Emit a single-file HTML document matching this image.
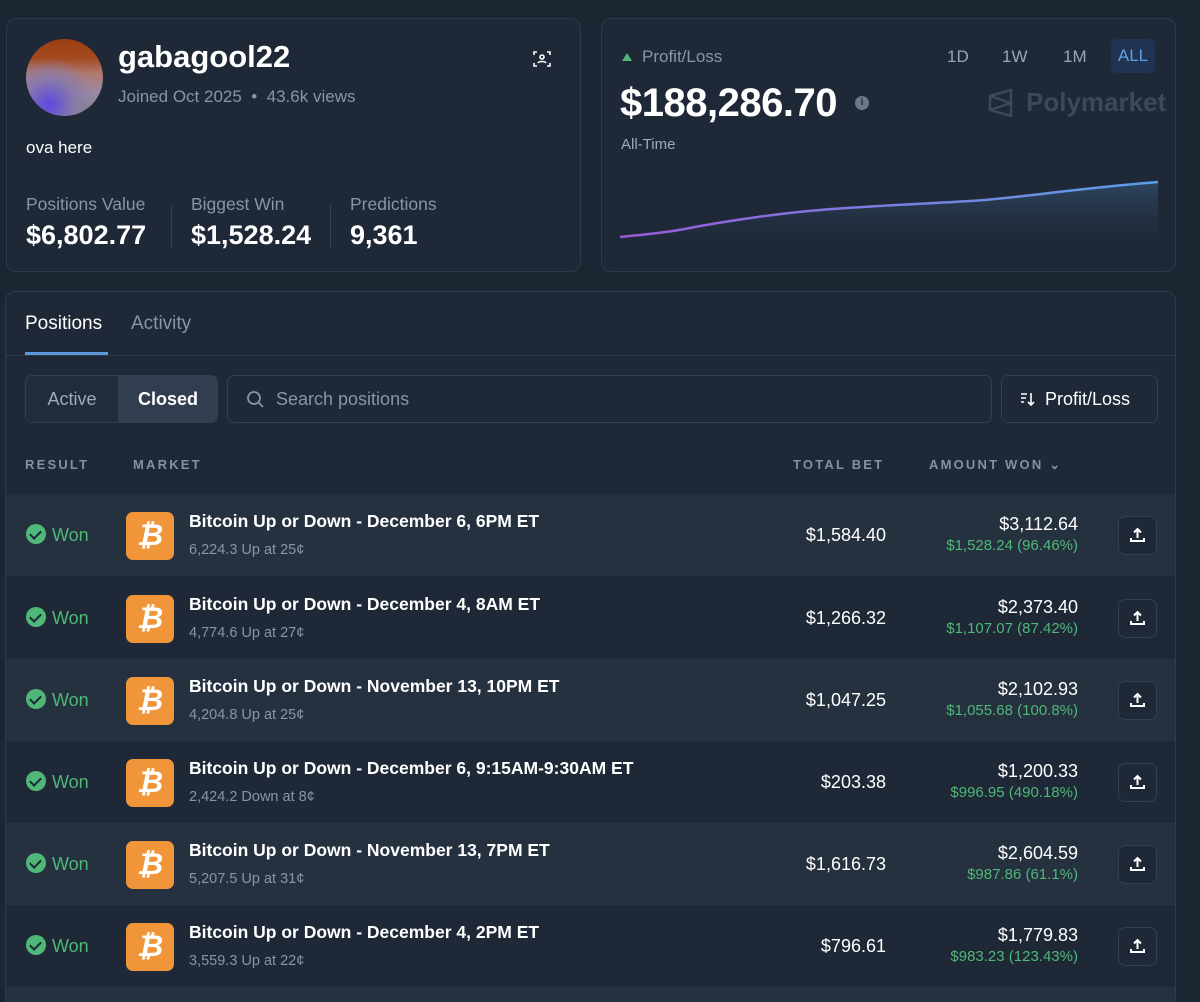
<!DOCTYPE html>
<html><head><meta charset="utf-8"><style>
*{box-sizing:border-box;margin:0;padding:0}
html,body{width:1200px;height:1002px;overflow:hidden}
body{background:#1c2532;font-family:"Liberation Sans",sans-serif;color:#fff;position:relative}
.a{position:absolute}
.card{position:absolute;border:1px solid #2f3a4a;border-radius:10px;background:#1e2836}
.g{color:#8995a5}
.lbl{font-size:13px;letter-spacing:2.2px;font-weight:bold;color:#8591a3}
.row{position:absolute;left:6px;width:1169px;height:82px}
.row.l{background:#263140}
.won{position:absolute;left:20px;top:30px;font-size:18px;color:#4fb878}
.won i{display:inline-block;width:20px;height:20px;border-radius:50%;background:#4fb878;vertical-align:-3px;margin-right:6px;position:relative}
.won i:after{content:"";position:absolute;left:6px;top:4px;width:5px;height:9px;border:solid #1e2836;border-width:0 2.5px 2.5px 0;transform:rotate(45deg)}
.btc{position:absolute;left:120px;top:18px;width:48px;height:48px;border-radius:7px;background:#f0953a;color:#fff;font-size:30px;font-weight:bold;text-align:center;line-height:48px;font-style:italic}
.t{position:absolute;left:183px;top:17px;font-size:17.5px;font-weight:bold}
.s{position:absolute;left:183px;top:48px;font-size:14.5px;color:#8995a5}
.tb{position:absolute;right:289px;top:31px;font-size:18px}
.aw{position:absolute;right:97px;top:19px;font-size:18px;text-align:right;line-height:23px}
.aw span{display:block;font-size:15px;color:#4fb878;line-height:20px}
.sh{position:absolute;left:1112px;top:22px;width:39px;height:39px;border:1px solid #333e4f;border-radius:7px;background:#1e2836}
</style></head><body>
<div class="card" style="left:6px;top:18px;width:575px;height:254px">
 <div class="a" style="left:19px;top:20px;width:77px;height:77px;border-radius:50%;background:radial-gradient(circle at 30% 85%,#5a48e0 0,#8a7aa8 30%,transparent 55%),linear-gradient(180deg,#9a3e12 0,#a34a1e 25%,#b07a70 45%,#9a8aa8 70%,#7a8870 100%)"></div>
 <div class="a" style="left:111px;top:20px;font-size:31px;font-weight:bold">gabagool22</div>
 <div class="a g" style="left:111px;top:68px;font-size:17px">Joined Oct 2025 &nbsp;•&nbsp; 43.6k views</div>
 <svg class="a" style="left:526px;top:31px" width="18" height="18" viewBox="0 0 18 18" fill="none" stroke="#fff" stroke-width="1.6"><path d="M1 5V2h3M14 2h3v3M17 13v3h-3M4 16H1v-3"/><circle cx="9" cy="7" r="2"/><path d="M5 13c1-2 7-2 8 0"/></svg>
 <div class="a" style="left:19px;top:119px;font-size:17px">ova here</div>
 <div class="a g" style="left:19px;top:175px;font-size:17.5px">Positions Value</div>
 <div class="a" style="left:19px;top:201px;font-size:27px;font-weight:bold">$6,802.77</div>
 <div class="a" style="left:164px;top:185px;width:1px;height:44px;background:#333e4f"></div>
 <div class="a g" style="left:184px;top:175px;font-size:17.5px">Biggest Win</div>
 <div class="a" style="left:184px;top:201px;font-size:27px;font-weight:bold">$1,528.24</div>
 <div class="a" style="left:323px;top:185px;width:1px;height:44px;background:#333e4f"></div>
 <div class="a g" style="left:343px;top:175px;font-size:17.5px">Predictions</div>
 <div class="a" style="left:343px;top:201px;font-size:27px;font-weight:bold">9,361</div>
</div>
<div class="card" style="left:601px;top:18px;width:575px;height:254px">
 <div class="a" style="left:20px;top:34px;width:0;height:0;border-left:5px solid transparent;border-right:5px solid transparent;border-bottom:8px solid #4fb878"></div>
 <div class="a g" style="left:40px;top:28px;font-size:17px">Profit/Loss</div>
 <div class="a g" style="left:345px;top:28px;font-size:17px;color:#9aa5b5">1D</div>
 <div class="a g" style="left:400px;top:28px;font-size:17px;color:#9aa5b5">1W</div>
 <div class="a g" style="left:461px;top:28px;font-size:17px;color:#9aa5b5">1M</div>
 <div class="a" style="left:509px;top:20px;width:44px;height:34px;border-radius:6px;background:#223352;color:#5aa0e6;font-size:17px;text-align:center;line-height:34px">ALL</div>
 <div class="a" style="left:18px;top:62px;font-size:40px;font-weight:bold;letter-spacing:-0.5px">$188,286.70</div>
 <div class="a" style="left:253px;top:77px;width:14px;height:14px;border-radius:50%;background:#6c7888;color:#1e2836;font-size:10px;font-weight:bold;text-align:center;line-height:14px">i</div>
 <svg class="a" style="left:386px;top:69px" width="26" height="30" viewBox="0 0 26 30" fill="none" stroke="#3d4858" stroke-width="2.5"><path d="M2 8L23 2v26L2 22zM2 8l21 7M2 22l21-7"/></svg>
 <div class="a" style="left:424px;top:68px;font-size:26px;font-weight:bold;color:#3d4858">Polymarket</div>
 <div class="a g" style="left:19px;top:117px;font-size:15px;color:#a0aab8">All-Time</div>
 <svg class="a" style="left:18px;top:137px" width="538" height="100" viewBox="0 0 538 100"><defs><linearGradient id="f" x1="0" y1="0" x2="0" y2="1"><stop offset="0" stop-color="#3a5a80" stop-opacity=".6"/><stop offset="1" stop-color="#1e2836" stop-opacity="0"/></linearGradient><linearGradient id="s" x1="0" x2="1"><stop offset="0" stop-color="#9a5ad8"/><stop offset="1" stop-color="#5aa0e6"/></linearGradient></defs><path d="M0 81C30 78 50 76 70 72S150 58 200 54S300 48 350 45S450 33 538 26V100H0z" fill="url(#f)"/><path d="M0 81C30 78 50 76 70 72S150 58 200 54S300 48 350 45S450 33 538 26" fill="none" stroke="url(#s)" stroke-width="2.5"/></svg>
</div>
<div class="card" style="left:5px;top:291px;width:1171px;height:740px;background:#1e2836">
 <div class="a" style="left:19px;top:21px;font-size:19px">Positions</div>
 <div class="a g" style="left:125px;top:21px;font-size:19px">Activity</div>
 <div class="a" style="left:19px;top:60px;width:83px;height:3px;background:#5a98d8"></div>
 <div class="a" style="left:0;top:63px;width:1169px;height:1px;background:#2f3a4a"></div>
 <div class="a" style="left:19px;top:83px;width:193px;height:48px;border:1px solid #333e4f;border-radius:7px;overflow:hidden">
  <div class="a" style="left:0;top:0;width:92px;height:46px;background:#212b39;color:#a0aab8;font-size:18px;text-align:center;line-height:46px">Active</div>
  <div class="a" style="left:92px;top:0;width:100px;height:46px;background:#323e50;font-size:18px;font-weight:bold;text-align:center;line-height:46px">Closed</div>
 </div>
 <div class="a" style="left:221px;top:83px;width:765px;height:48px;border:1px solid #333e4f;border-radius:7px">
  <svg class="a" style="left:18px;top:14px" width="19" height="19" viewBox="0 0 19 19" fill="none" stroke="#8995a5" stroke-width="1.8"><circle cx="8" cy="8" r="6"/><path d="M12.5 12.5L17 17"/></svg>
  <div class="a g" style="left:48px;top:13px;font-size:18px">Search positions</div>
 </div>
 <div class="a" style="left:995px;top:83px;width:157px;height:48px;border:1px solid #333e4f;border-radius:7px">
  <svg class="a" style="left:18px;top:16px" width="16" height="15" viewBox="0 0 16 15" fill="none" stroke="#fff" stroke-width="1.6"><path d="M1 2h6M1 6h5M1 10h3M11 1v12M8 10l3 3 3-3"/></svg>
  <div class="a" style="left:43px;top:13px;font-size:18px">Profit/Loss</div>
 </div>
 <div class="a lbl" style="left:19px;top:165px">RESULT</div>
 <div class="a lbl" style="left:127px;top:165px">MARKET</div>
 <div class="a lbl" style="left:787px;top:165px">TOTAL BET</div>
 <div class="a lbl" style="left:923px;top:165px">AMOUNT WON ⌄</div>
</div>
<div class="row l" style="top:494px"><div class="won"><i></i>Won</div><div class="btc">₿</div><div class="t">Bitcoin Up or Down - December 6, 6PM ET</div><div class="s">6,224.3 Up at 25¢</div><div class="tb">$1,584.40</div><div class="aw">$3,112.64<span>$1,528.24 (96.46%)</span></div><div class="sh"><svg class="a" style="left:10px;top:10px" width="17" height="17" viewBox="0 0 17 17" fill="none" stroke="#fff" stroke-width="2"><path d="M8.5 11V2M5 5.5l3.5-3.5 3.5 3.5M2 11v3h13v-3"/></svg></div></div>
<div class="row" style="top:577px"><div class="won"><i></i>Won</div><div class="btc">₿</div><div class="t">Bitcoin Up or Down - December 4, 8AM ET</div><div class="s">4,774.6 Up at 27¢</div><div class="tb">$1,266.32</div><div class="aw">$2,373.40<span>$1,107.07 (87.42%)</span></div><div class="sh"><svg class="a" style="left:10px;top:10px" width="17" height="17" viewBox="0 0 17 17" fill="none" stroke="#fff" stroke-width="2"><path d="M8.5 11V2M5 5.5l3.5-3.5 3.5 3.5M2 11v3h13v-3"/></svg></div></div>
<div class="row l" style="top:659px"><div class="won"><i></i>Won</div><div class="btc">₿</div><div class="t">Bitcoin Up or Down - November 13, 10PM ET</div><div class="s">4,204.8 Up at 25¢</div><div class="tb">$1,047.25</div><div class="aw">$2,102.93<span>$1,055.68 (100.8%)</span></div><div class="sh"><svg class="a" style="left:10px;top:10px" width="17" height="17" viewBox="0 0 17 17" fill="none" stroke="#fff" stroke-width="2"><path d="M8.5 11V2M5 5.5l3.5-3.5 3.5 3.5M2 11v3h13v-3"/></svg></div></div>
<div class="row" style="top:741px"><div class="won"><i></i>Won</div><div class="btc">₿</div><div class="t">Bitcoin Up or Down - December 6, 9:15AM-9:30AM ET</div><div class="s">2,424.2 Down at 8¢</div><div class="tb">$203.38</div><div class="aw">$1,200.33<span>$996.95 (490.18%)</span></div><div class="sh"><svg class="a" style="left:10px;top:10px" width="17" height="17" viewBox="0 0 17 17" fill="none" stroke="#fff" stroke-width="2"><path d="M8.5 11V2M5 5.5l3.5-3.5 3.5 3.5M2 11v3h13v-3"/></svg></div></div>
<div class="row l" style="top:823px"><div class="won"><i></i>Won</div><div class="btc">₿</div><div class="t">Bitcoin Up or Down - November 13, 7PM ET</div><div class="s">5,207.5 Up at 31¢</div><div class="tb">$1,616.73</div><div class="aw">$2,604.59<span>$987.86 (61.1%)</span></div><div class="sh"><svg class="a" style="left:10px;top:10px" width="17" height="17" viewBox="0 0 17 17" fill="none" stroke="#fff" stroke-width="2"><path d="M8.5 11V2M5 5.5l3.5-3.5 3.5 3.5M2 11v3h13v-3"/></svg></div></div>
<div class="row" style="top:905px"><div class="won"><i></i>Won</div><div class="btc">₿</div><div class="t">Bitcoin Up or Down - December 4, 2PM ET</div><div class="s">3,559.3 Up at 22¢</div><div class="tb">$796.61</div><div class="aw">$1,779.83<span>$983.23 (123.43%)</span></div><div class="sh"><svg class="a" style="left:10px;top:10px" width="17" height="17" viewBox="0 0 17 17" fill="none" stroke="#fff" stroke-width="2"><path d="M8.5 11V2M5 5.5l3.5-3.5 3.5 3.5M2 11v3h13v-3"/></svg></div></div>
<div class="row l" style="top:987px;height:15px"></div>
</body></html>
